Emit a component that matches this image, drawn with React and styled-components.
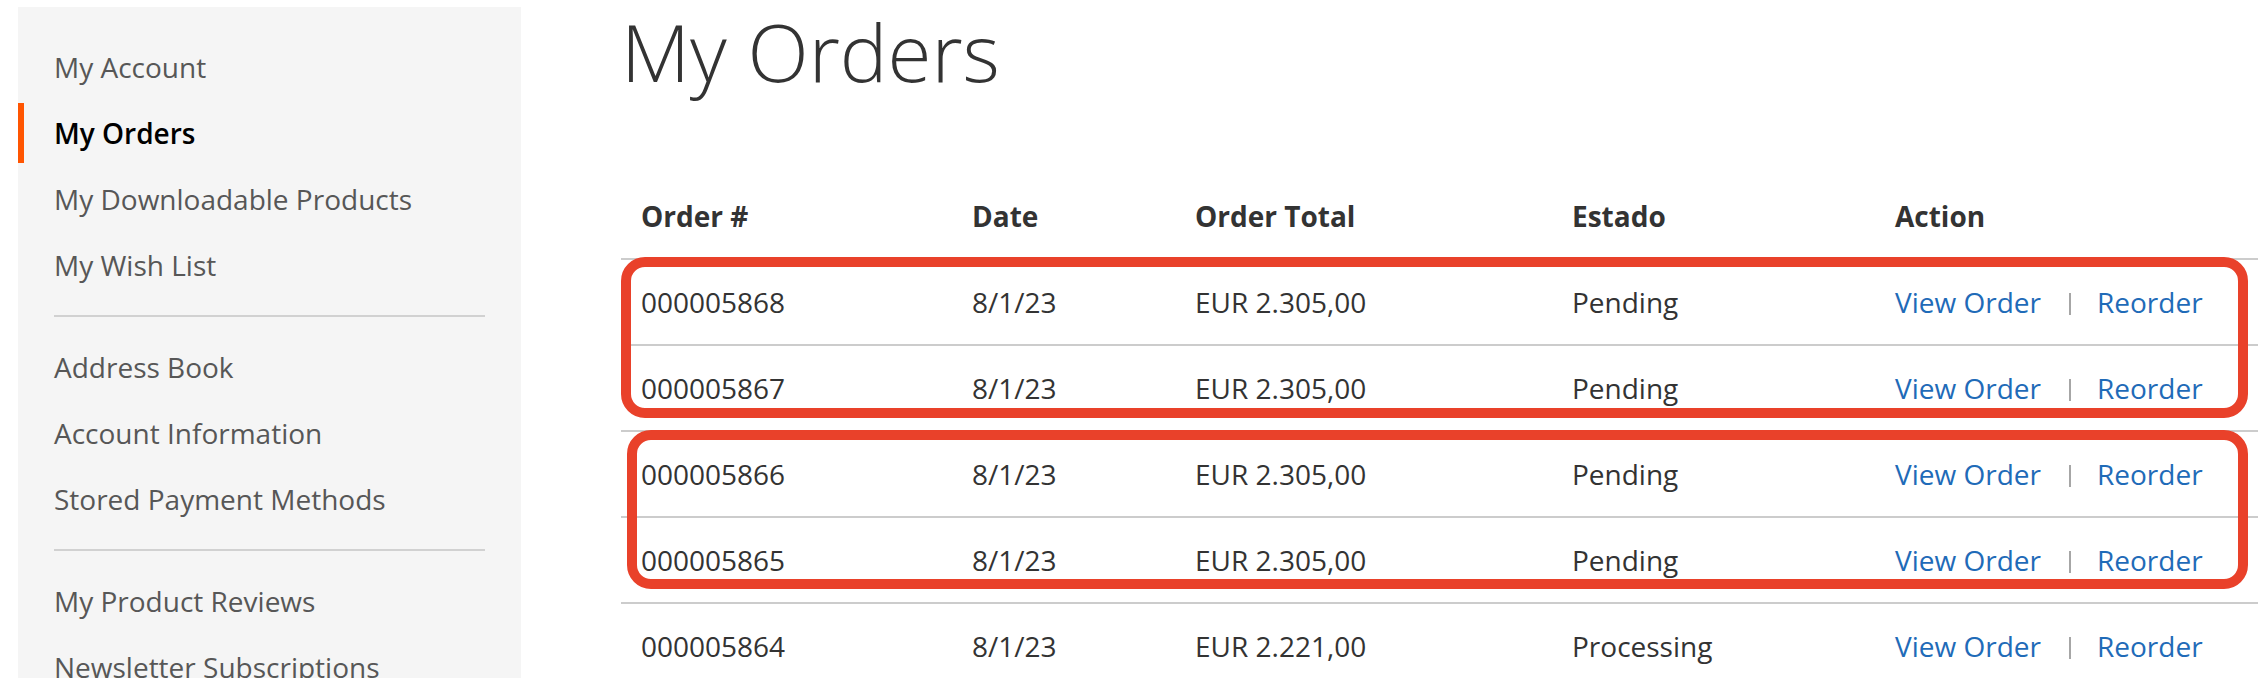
import React from 'react'
import styled, { createGlobalStyle } from 'styled-components'

const navGroups = [
  [
    { label: 'My Account' },
    { label: 'My Orders', current: true },
    { label: 'My Downloadable Products' },
    { label: 'My Wish List' },
  ],
  [
    { label: 'Address Book' },
    { label: 'Account Information' },
    { label: 'Stored Payment Methods' },
  ],
  [
    { label: 'My Product Reviews' },
    { label: 'Newsletter Subscriptions' },
  ],
]

const orders = [
  { id: '000005868', date: '8/1/23', total: 'EUR 2.305,00', status: 'Pending' },
  { id: '000005867', date: '8/1/23', total: 'EUR 2.305,00', status: 'Pending' },
  { id: '000005866', date: '8/1/23', total: 'EUR 2.305,00', status: 'Pending' },
  { id: '000005865', date: '8/1/23', total: 'EUR 2.305,00', status: 'Pending' },
  { id: '000005864', date: '8/1/23', total: 'EUR 2.221,00', status: 'Processing' },
]

function App() {
  return (
    <>
      <GlobalStyle />
      <Page>
        <Sidebar>
          <NavList>
            {navGroups.map((group, gi) => (
              <React.Fragment key={gi}>
                {gi > 0 && (
                  <NavItem>
                    <Delimiter />
                  </NavItem>
                )}
                {group.map((item) => (
                  <NavItem key={item.label}>
                    <NavLink $current={item.current}>{item.label}</NavLink>
                  </NavItem>
                ))}
              </React.Fragment>
            ))}
          </NavList>
        </Sidebar>

        <Main>
          <Title>My Orders</Title>
          <TableWrap>
            <Table>
              <colgroup>
                <col style={{ width: 331 }} />
                <col style={{ width: 223 }} />
                <col style={{ width: 377 }} />
                <col style={{ width: 323 }} />
                <col />
              </colgroup>
              <thead>
                <tr>
                  <Th>Order #</Th>
                  <Th>Date</Th>
                  <Th>Order Total</Th>
                  <Th>Estado</Th>
                  <Th>Action</Th>
                </tr>
              </thead>
              <tbody>
                {orders.map((o) => (
                  <tr key={o.id}>
                    <Td>{o.id}</Td>
                    <Td>{o.date}</Td>
                    <Td>{o.total}</Td>
                    <Td>{o.status}</Td>
                    <Td>
                      <ActionLink href="#">View Order</ActionLink>
                      <Separator />
                      <ActionLink href="#">Reorder</ActionLink>
                    </Td>
                  </tr>
                ))}
              </tbody>
            </Table>
            <Highlight $top={83} $left={0} $height={161} />
            <Highlight $top={256} $left={6} $height={159} />
          </TableWrap>
        </Main>
      </Page>
    </>
  )
}

export default App

//#region Styling
const GlobalStyle = createGlobalStyle`
  html, body {
    margin: 0;
    padding: 0;
    background: #fff;
    overflow: hidden;
  }
  body {
    font-family: 'Open Sans', 'Helvetica Neue', Helvetica, Arial, sans-serif;
    color: #333;
  }
`

const Page = styled.div`
  display: flex;
  align-items: flex-start;
  gap: 100px;
  padding: 7px 0 0 18px;
`

const Sidebar = styled.aside`
  flex: 0 0 503px;
  background: #f5f5f5;
  padding: 30px 0;
`

const NavList = styled.ul`
  list-style: none;
  margin: 0;
  padding: 0;
`

const NavItem = styled.li`
  margin: 6px 0 0;
  &:first-child {
    margin-top: 0;
  }
`

const NavLink = styled.a`
  display: block;
  padding: 10px 36px 10px 30px;
  border-left: 6px solid ${(p) => (p.$current ? '#ff5501' : 'transparent')};
  font-size: 28px;
  line-height: 40px;
  font-weight: ${(p) => (p.$current ? 600 : 400)};
  color: ${(p) => (p.$current ? '#000' : '#575757')};
  text-decoration: none;
  cursor: pointer;
`

const Delimiter = styled.span`
  display: block;
  border-top: 2px solid #d1d1d1;
  margin: 20px 36px 20px;
`

const Main = styled.main`
  flex: 1;
  min-width: 0;
`

const Title = styled.h1`
  margin: 0 0 79px;
  font-size: 80px;
  line-height: 88px;
  font-weight: 300;
  color: #333;
`

const TableWrap = styled.div`
  position: relative;
`

const Table = styled.table`
  width: 100%;
  table-layout: fixed;
  border-collapse: collapse;
  font-size: 28px;
  line-height: 40px;
  color: #333;
`

const Th = styled.th`
  text-align: left;
  font-weight: 700;
  padding: 22px 20px;
  border-bottom: 2px solid #ccc;
  white-space: nowrap;
`

const Td = styled.td`
  padding: 22px 20px;
  border-top: 2px solid #ccc;
  white-space: nowrap;
`

const ActionLink = styled.a`
  color: #1f6bb8;
  text-decoration: none;
`

const Separator = styled.span`
  display: inline-block;
  height: 22px;
  border-left: 2px solid #a6a6a6;
  margin: 0 26px 0 28px;
  vertical-align: -2px;
`

const Highlight = styled.div`
  position: absolute;
  top: ${(p) => p.$top}px;
  left: ${(p) => p.$left}px;
  right: 10px;
  height: ${(p) => p.$height}px;
  box-sizing: border-box;
  border: 10px solid #e9412a;
  border-radius: 24px;
  pointer-events: none;
`
//#endregion
